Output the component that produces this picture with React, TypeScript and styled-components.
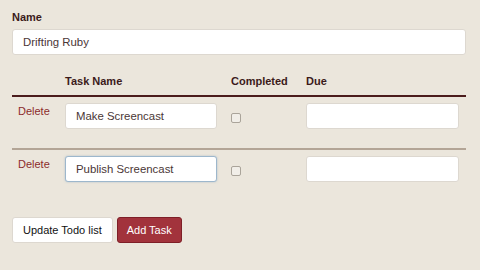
import React from "react";
import styled, { createGlobalStyle } from "styled-components";

const GlobalStyle = createGlobalStyle`
  html, body {
    margin: 0;
    background: #ebe6dc;
    font-family: "Liberation Sans", Arial, sans-serif;
    color: #3b1a1a;
  }
`;

const Page = styled.div`
  width: 480px;
  height: 270px;
  box-sizing: border-box;
  padding: 10px 14px 0 12px;
`;

const Label = styled.div`
  font-size: 11px;
  font-weight: bold;
  line-height: 14px;
  margin-bottom: 5px;
`;

const TextInput = styled.input<{ $focused?: boolean }>`
  box-sizing: border-box;
  width: 100%;
  height: 26px;
  padding: 0 10px;
  border: 1px solid ${(p) => (p.$focused ? "#9db7cc" : "#ddd8d0")};
  box-shadow: ${(p) => (p.$focused ? "0 0 2px rgba(110,150,190,0.5)" : "none")};
  border-radius: 3px;
  background: #fff;
  font-family: inherit;
  font-size: 11.4px;
  color: #4a3636;
  outline: none;
`;

const Table = styled.div`
  margin-top: 19px;
`;

const Row = styled.div<{ $head?: boolean; $last?: boolean }>`
  display: grid;
  grid-template-columns: 53px 166px 75px 160px;
  align-items: ${(p) => (p.$head ? "end" : "start")};
  padding: ${(p) => (p.$head ? "0 0 7px" : "6px 0 19px")};
  border-bottom: 2px solid
    ${(p) => (p.$head ? "#4b1c1c" : p.$last ? "transparent" : "#b3a596")};
`;

const HeadCell = styled.div`
  font-size: 11px;
  font-weight: bold;
  line-height: 14px;
`;

const DeleteLink = styled.a`
  font-size: 11px;
  line-height: 14px;
  color: #8c2b2b;
  padding: 1px 0 0 6px;
  cursor: pointer;
`;

const Cell = styled.div<{ $width: number }>`
  width: ${(p) => p.$width}px;
`;

const CheckCell = styled.div`
  height: 26px;
  display: flex;
  align-items: center;
  padding-top: 3px;
  box-sizing: border-box;
`;

const Check = styled.span`
  width: 8px;
  height: 8px;
  border: 1px solid #aaa49a;
  border-radius: 2px;
  background: #f1eee8;
`;

const Actions = styled.div`
  display: flex;
  gap: 4px;
  margin-top: 14px;
`;

const Button = styled.button<{ $primary?: boolean }>`
  height: 26px;
  padding: 0 ${(p) => (p.$primary ? 9 : 10)}px;
  border: 1px solid ${(p) => (p.$primary ? "#7e1f27" : "#ddd8d0")};
  border-radius: 3px;
  background: ${(p) => (p.$primary ? "#a2333c" : "#fff")};
  color: ${(p) => (p.$primary ? "#fff" : "#111")};
  font-family: inherit;
  font-size: 11px;
  cursor: pointer;
`;

const tasks = [
  { name: "Make Screencast", focused: false },
  { name: "Publish Screencast", focused: true },
];

export default function App() {
  return (
    <Page>
      <GlobalStyle />
      <Label>Name</Label>
      <TextInput defaultValue="Drifting Ruby" />
      <Table>
        <Row $head>
          <div />
          <HeadCell>Task Name</HeadCell>
          <HeadCell>Completed</HeadCell>
          <HeadCell>Due</HeadCell>
        </Row>
        {tasks.map((t, i) => (
          <Row key={t.name} $last={i === tasks.length - 1}>
            <DeleteLink>Delete</DeleteLink>
            <Cell $width={152}>
              <TextInput defaultValue={t.name} $focused={t.focused} />
            </Cell>
            <CheckCell>
              <Check />
            </CheckCell>
            <Cell $width={153}>
              <TextInput />
            </Cell>
          </Row>
        ))}
      </Table>
      <Actions>
        <Button>Update Todo list</Button>
        <Button $primary>Add Task</Button>
      </Actions>
    </Page>
  );
}
